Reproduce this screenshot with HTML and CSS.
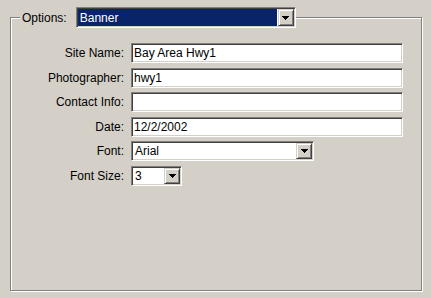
FILE: index.html
```html
<!DOCTYPE html>
<html lang="en">

<head>
    <meta charset="UTF-8">
    <title>Banner Options</title>
    <link rel="stylesheet" href="styles.css">
</head>

<body>
    <fieldset class="group">
        <legend class="group-title">
            <span class="title-label">Options:</span>
            <div class="combo combo-options">
                <span class="combo-value selected">Banner</span>
                <span class="combo-btn"><svg width="7" height="4" viewBox="0 0 7 4"><path d="M0 0h7v1h-1v1h-1v1h-1v1h-1v-1h-1v-1h-1v-1h-1z" fill="#000"/></svg></span>
            </div>
        </legend>

        <div class="form">
            <label for="siteName">Site Name:</label>
            <input type="text" id="siteName" class="field" value="Bay Area Hwy1">

            <label for="photographer">Photographer:</label>
            <input type="text" id="photographer" class="field" value="hwy1">

            <label for="contact">Contact Info:</label>
            <input type="text" id="contact" class="field" value="">

            <label for="date">Date:</label>
            <input type="text" id="date" class="field" value="12/2/2002">

            <label>Font:</label>
            <div class="combo combo-font">
                <span class="combo-value">Arial</span>
                <span class="combo-btn"><svg width="7" height="4" viewBox="0 0 7 4"><path d="M0 0h7v1h-1v1h-1v1h-1v1h-1v-1h-1v-1h-1v-1h-1z" fill="#000"/></svg></span>
            </div>

            <label>Font Size:</label>
            <div class="combo combo-size">
                <span class="combo-value">3</span>
                <span class="combo-btn"><svg width="7" height="4" viewBox="0 0 7 4"><path d="M0 0h7v1h-1v1h-1v1h-1v1h-1v-1h-1v-1h-1v-1h-1z" fill="#000"/></svg></span>
            </div>
        </div>
    </fieldset>
</body>

</html>
```

FILE: styles.css
```css
html,
body {
    height: 100%;
}

body {
    margin: 0;
    padding: 7px 9px 7px 10px;
    box-sizing: border-box;
    display: flex;
    background-color: #d4d0c8;
    font-family: "Liberation Sans", Arial, sans-serif;
    font-size: 12px;
    color: #000;
}

.group {
    flex: 1;
    min-width: 0;
    margin: 0;
    padding: 0;
    border: 1px solid #808080;
    box-shadow: inset 1px 1px 0 #fff, 1px 1px 0 #fff;
}

.group-title {
    display: flex;
    align-items: center;
    margin-left: 9px;
    padding: 0 0 0 2px;
    background-color: #d4d0c8;
}

.title-label {
    margin-right: 9px;
}

/* sunken win2k style field */
.field,
.combo {
    box-sizing: border-box;
    height: 20px;
    border: 1px solid;
    border-color: #808080 #fff #fff #808080;
    box-shadow: inset 1px 1px 0 #404040, inset -1px -1px 0 #d4d0c8;
    background-color: #fff;
}

.field {
    width: 272px;
    padding: 0 2px;
    margin: 0;
    font-family: inherit;
    font-size: 12px;
    color: #000;
    outline: none;
}

.combo {
    display: flex;
    align-items: stretch;
    padding: 1px;
}

.combo-options {
    width: 220px;
    height: 21px;
}

.combo-font {
    width: 183px;
}

.combo-size {
    width: 51px;
}

.combo-value {
    flex: 1;
    display: flex;
    align-items: center;
    padding-left: 2px;
    margin-right: 1px;
    white-space: nowrap;
    overflow: hidden;
}

.combo-value.selected {
    background-color: #0a246a;
    color: #fff;
}

.combo-btn {
    box-sizing: border-box;
    width: 16px;
    display: flex;
    align-items: center;
    justify-content: center;
    border: 1px solid;
    border-color: #d4d0c8 #404040 #404040 #d4d0c8;
    box-shadow: inset 1px 1px 0 #fff, inset -1px -1px 0 #808080;
    background-color: #d4d0c8;
}

.combo-btn svg {
    display: block;
    shape-rendering: crispEdges;
}

.form {
    display: grid;
    grid-template-columns: 113px auto;
    column-gap: 7px;
    row-gap: 4.6px;
    align-items: center;
    justify-items: start;
    margin-top: 15px;
}

.form label {
    justify-self: end;
}
```
